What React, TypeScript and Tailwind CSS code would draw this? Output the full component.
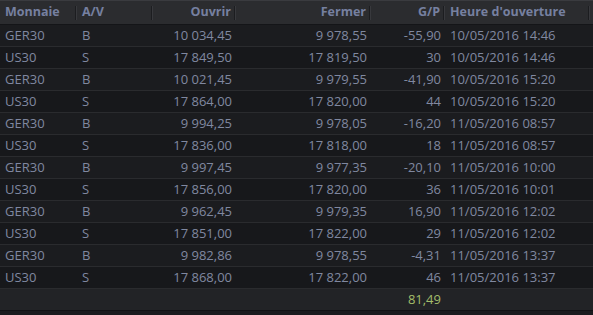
const trades = [
  ["GER30", "B", "10 034,45", "9 978,55", "-55,90", "10/05/2016 14:46"],
  ["US30", "S", "17 849,50", "17 819,50", "30", "10/05/2016 14:46"],
  ["GER30", "B", "10 021,45", "9 979,55", "-41,90", "10/05/2016 15:20"],
  ["US30", "S", "17 864,00", "17 820,00", "44", "10/05/2016 15:20"],
  ["GER30", "B", "9 994,25", "9 978,05", "-16,20", "11/05/2016 08:57"],
  ["US30", "S", "17 836,00", "17 818,00", "18", "11/05/2016 08:57"],
  ["GER30", "B", "9 997,45", "9 977,35", "-20,10", "11/05/2016 10:00"],
  ["US30", "S", "17 856,00", "17 820,00", "36", "11/05/2016 10:01"],
  ["GER30", "B", "9 962,45", "9 979,35", "16,90", "11/05/2016 12:02"],
  ["US30", "S", "17 851,00", "17 822,00", "29", "11/05/2016 12:02"],
  ["GER30", "B", "9 982,86", "9 978,55", "-4,31", "11/05/2016 13:37"],
  ["US30", "S", "17 868,00", "17 822,00", "46", "11/05/2016 13:37"],
];

const cols = "grid grid-cols-[77px_76px_83px_135px_74px_145px]";

function Sep() {
  return <div className="absolute right-0 top-[5px] bottom-[4px] w-[2px] border-l border-[#1c1d20] border-r border-r-[#38393d]" />;
}

export default function App() {
  return (
    <div className="w-[593px] h-[315px] bg-[#1a1b1e] overflow-hidden text-[13px] text-[#8088a0]" style={{ fontFamily: '"Open Sans", "Liberation Sans", sans-serif' }}>
      {/* header */}
      <div className={`${cols} h-[25px] bg-[#2b2c2f] border-t border-[#3a3b3f] border-b border-b-[#141518] font-bold text-[12.5px] text-[#7680a0] items-center`}>
        <div className="relative h-full flex items-center pl-[5px]">Monnaie<Sep /></div>
        <div className="relative h-full flex items-center pl-[5px]">A/V<Sep /></div>
        <div className="relative h-full flex items-center justify-end pr-[5px]">Ouvrir<Sep /></div>
        <div className="relative h-full flex items-center justify-end pr-[5px]">Fermer<Sep /></div>
        <div className="relative h-full flex items-center justify-end pr-[5px]">G/P<Sep /></div>
        <div className="relative h-full flex items-center pl-[5px]">Heure d'ouverture<Sep /></div>
      </div>
      {/* rows */}
      {trades.map((t, i) => (
        <div key={i} className={`${cols} h-[22px] items-center border-b border-[#2a2b2e] ${i % 2 === 0 ? "bg-[#1b1c1f]" : "bg-[#17181b]"}`}>
          <div className="pl-[5px]">{t[0]}</div>
          <div className="pl-[5px]">{t[1]}</div>
          <div className="text-right pr-[4px]">{t[2]}</div>
          <div className="text-right pr-[4px]">{t[3]}</div>
          <div className="text-right pr-[4px]">{t[4]}</div>
          <div className="pl-[5px]">{t[5]}</div>
        </div>
      ))}
      {/* total */}
      <div className={`${cols} h-[22px] items-center bg-[#222326] border-b border-[#111214]`}>
        <div />
        <div />
        <div />
        <div />
        <div className="text-right pr-[4px] text-[#a3bd6a]">81,49</div>
        <div />
      </div>
    </div>
  );
}
